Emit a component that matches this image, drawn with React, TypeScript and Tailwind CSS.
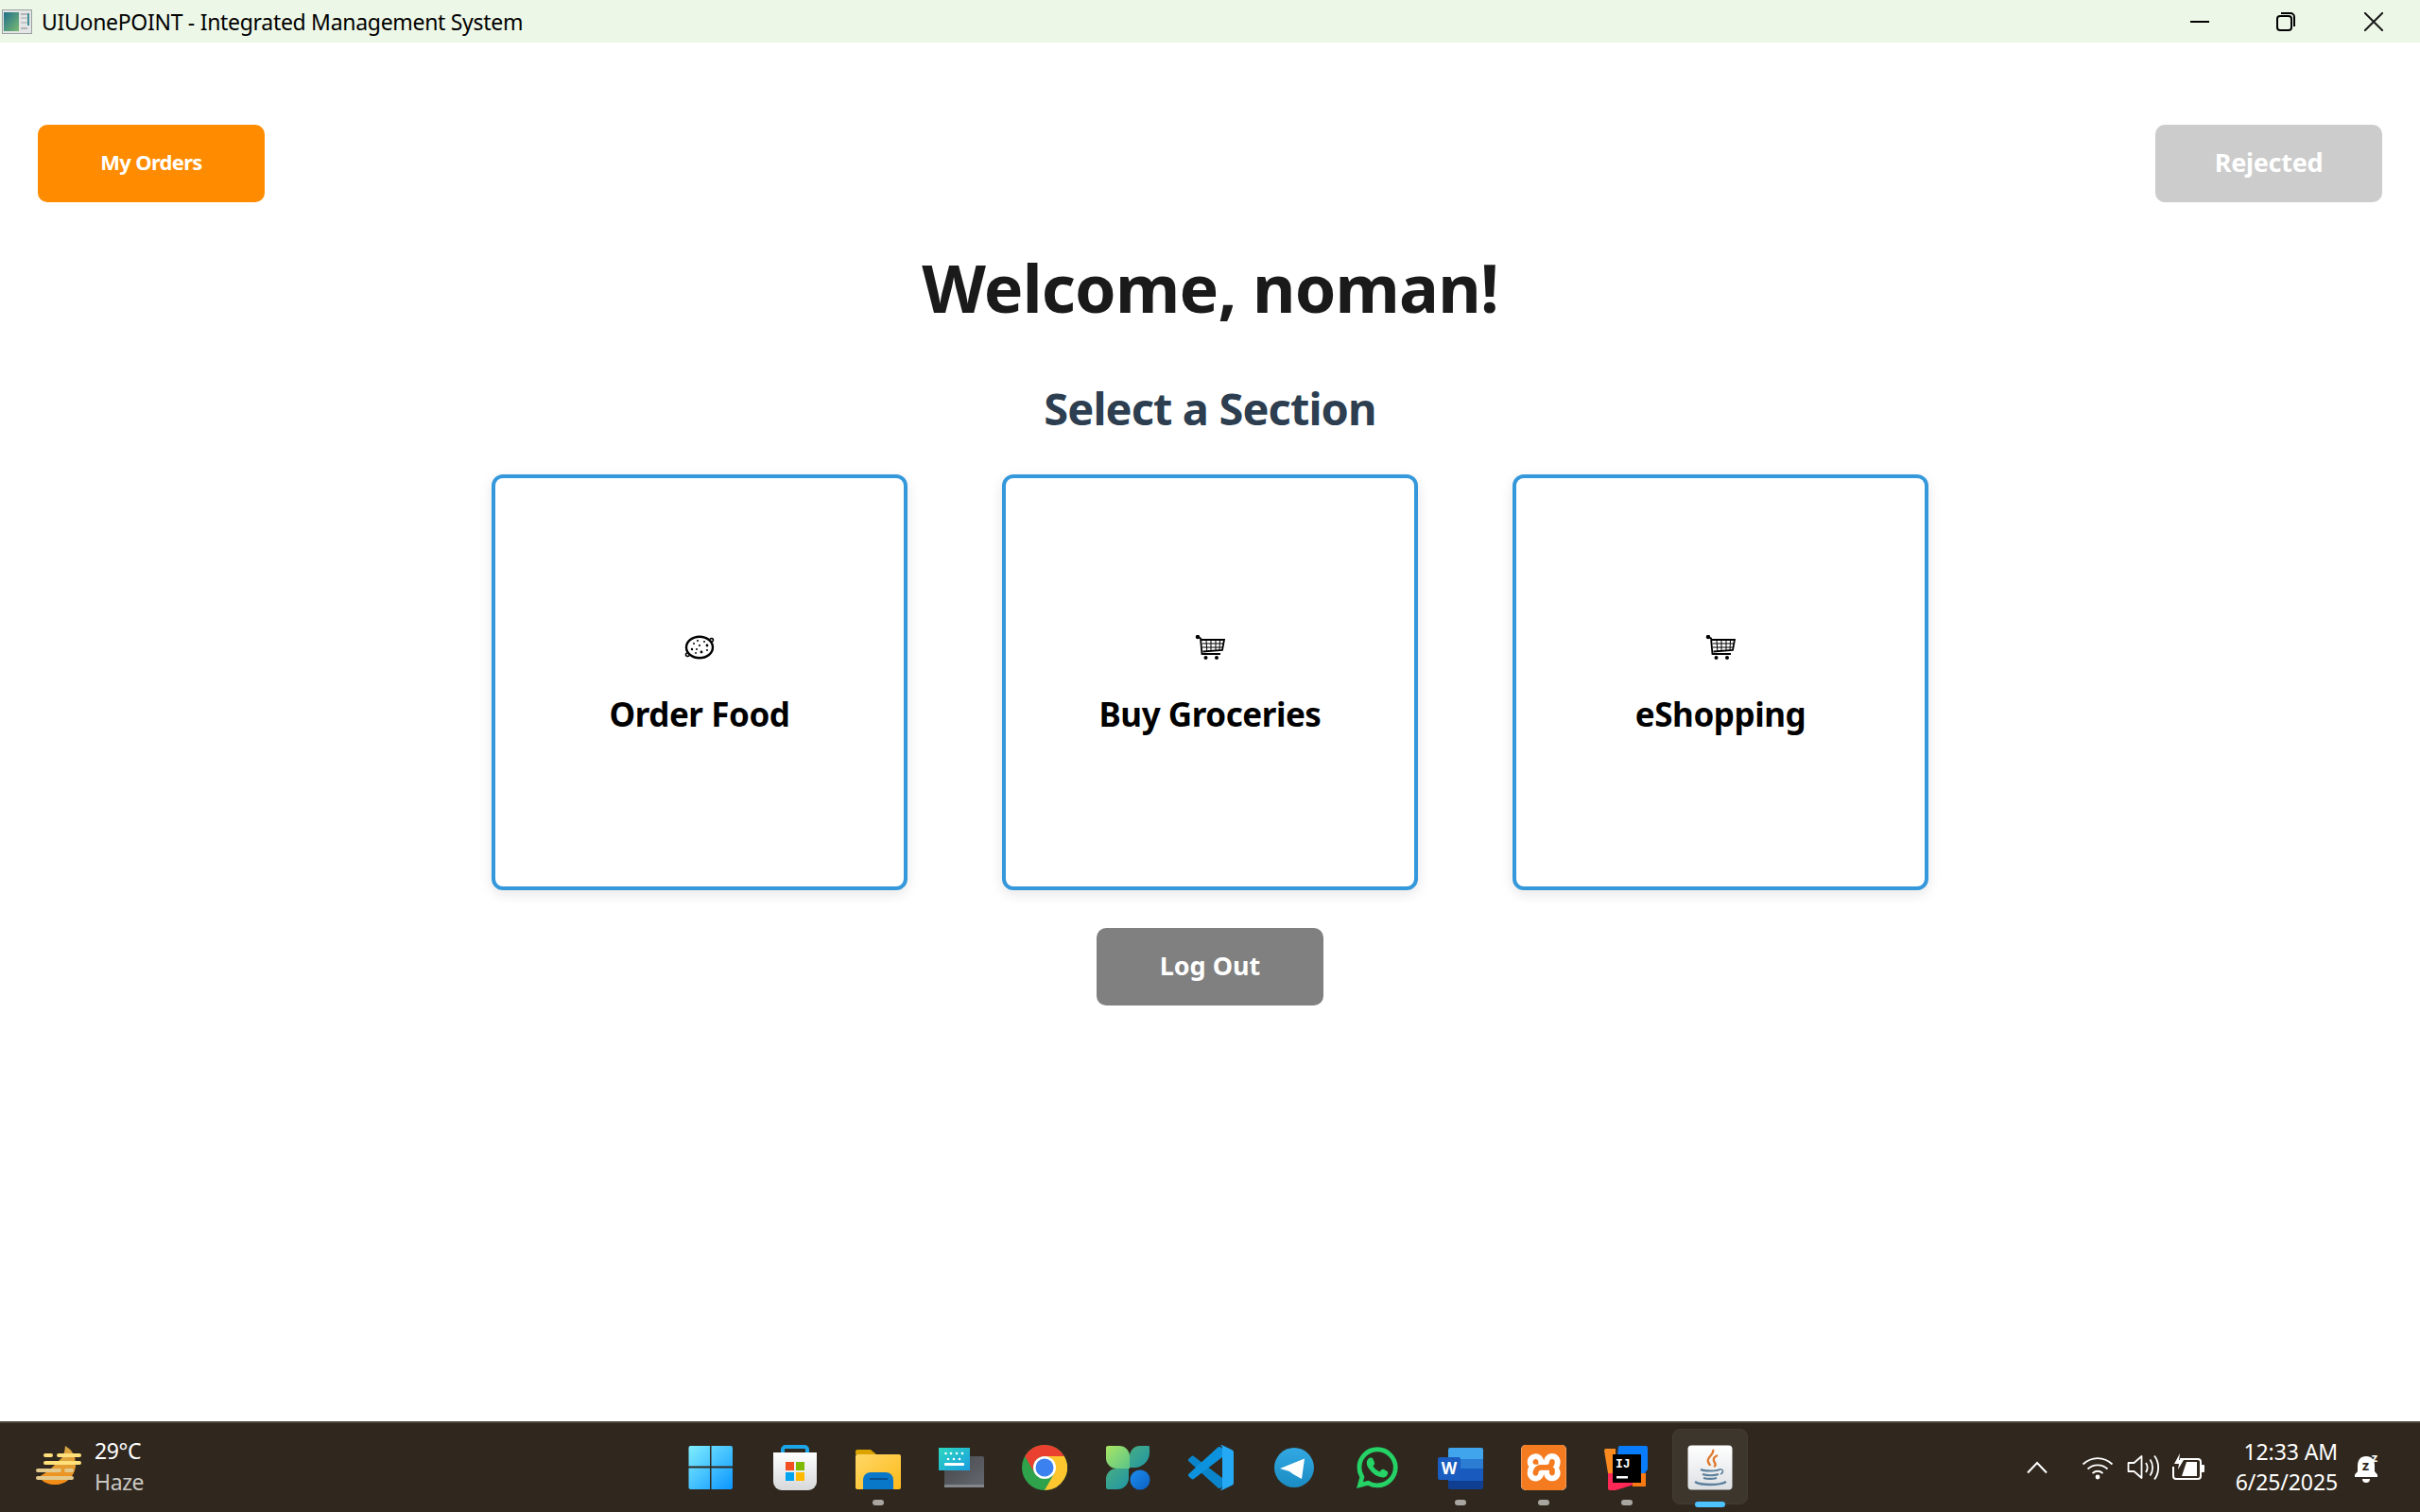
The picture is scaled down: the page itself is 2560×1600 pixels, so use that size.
import { FaWhatsapp } from 'react-icons/fa';
import { SiXampp } from 'react-icons/si';

const AppIcon = () => (
  <svg width="32" height="26" viewBox="0 0 32 26">
    <rect x="0.5" y="0.5" width="31" height="25" fill="#e4e6e6" stroke="#9aa0a3" />
    <defs>
      <linearGradient id="titleIcon" x1="0" y1="0" x2="1" y2="1">
        <stop offset="0" stopColor="#1f6f8b" />
        <stop offset="1" stopColor="#7dbb72" />
      </linearGradient>
    </defs>
    <rect x="2" y="3" width="16" height="20" fill="url(#titleIcon)" />
    <rect x="20" y="4" width="9" height="2" fill="#b3b6b8" />
    <rect x="20" y="8" width="7" height="2" fill="#c4c6c8" />
    <rect x="20" y="13" width="7" height="2" fill="#c4c6c8" />
    <rect x="20" y="19" width="7" height="2" fill="#b3b6b8" />
    <rect x="27" y="4" width="2" height="13" fill="#3f8f97" />
  </svg>
);

const FoodIcon = () => (
  <svg width="32" height="26" viewBox="0 0 32 26" fill="none">
    <path d="M27 4.5c1-1.6 3.5-1 3.5.7 0 1-.7 1.6-1.6 1.8M5 21.5c-1 1.6-3.6 1-3.6-.7 0-1 .8-1.7 1.7-1.8" stroke="#000" strokeWidth="1.6" />
    <ellipse cx="16" cy="13" rx="14" ry="11.3" fill="#fff" stroke="#000" strokeWidth="2.4" />
    <g fill="#000">
      <circle cx="8" cy="15" r="1.2" />
      <circle cx="10" cy="9" r="1" />
      <circle cx="14" cy="6" r="1" />
      <circle cx="16" cy="11" r="1.1" />
      <circle cx="21" cy="7" r="1" />
      <circle cx="24" cy="11" r="1.4" />
      <circle cx="13" cy="15" r="1" />
      <circle cx="18" cy="18" r="1.4" />
      <circle cx="24" cy="16" r="1" />
      <circle cx="12" cy="19" r="0.9" />
    </g>
  </svg>
);

const CartIcon = () => (
  <svg width="32" height="26" viewBox="0 0 32 26" fill="none" stroke="#000">
    <path d="M1 1.5 6 3.5 7.5 20H27" strokeWidth="1.8" />
    <circle cx="3" cy="2" r="2.2" fill="#000" stroke="none" />
    <path d="M7 5H31L29 16 8.5 17.5" strokeWidth="1.8" />
    <path d="M12 5.5 12.8 17M17 5.5V17M22 5.5V16.5M26.5 5.5 26 16M7.5 9H30.3M8 13H29.6" strokeWidth="1" />
    <circle cx="11.5" cy="24" r="2" fill="#000" stroke="none" />
    <circle cx="23" cy="24" r="2" fill="#000" stroke="none" />
  </svg>
);

const WindowsIcon = () => (
  <svg width="48" height="48" viewBox="0 0 48 48" className="overflow-visible">
    <defs>
      <linearGradient id="win" x1="0" y1="0" x2="1" y2="1">
        <stop offset="0" stopColor="#80eeff" />
        <stop offset="1" stopColor="#0b96ff" />
      </linearGradient>
    </defs>
    <path d="M3 2h20.5v21.5H1V4a2 2 0 0 1 2-2ZM25 2h20.5a2 2 0 0 1 2 2v19.5H25V2ZM1 25.500h22.500V48H3a2 2 0 0 1-2-2V25.500ZM25 25.500h22.500V46a2 2 0 0 1-2 2H25V25.500Z" fill="url(#win)" transform="translate(-1.500 -1)" />
  </svg>
);

const StoreIcon = () => (
  <svg width="48" height="48" viewBox="0 0 48 48">
    <defs>
      <linearGradient id="bag" x1="0" y1="0" x2="0" y2="1">
        <stop offset="0" stopColor="#ffffff" />
        <stop offset="1" stopColor="#d6d8da" />
      </linearGradient>
    </defs>
    <path d="M11 10V5a3 3 0 0 1 3-3h20a3 3 0 0 1 3 3v5" fill="none" stroke="#1ba6ea" strokeWidth="4" strokeLinecap="round" />
    <path d="M1 8h46v31a9 9 0 0 1-9 9H10a9 9 0 0 1-9-9V8Z" fill="url(#bag)" />
    <rect x="14" y="18" width="9" height="9" fill="#f25022" />
    <rect x="25" y="18" width="9" height="9" fill="#7fba00" />
    <rect x="14" y="29" width="9" height="9" fill="#00a4ef" />
    <rect x="25" y="29" width="9" height="9" fill="#ffb900" />
  </svg>
);

const FolderIcon = () => (
  <svg width="48" height="48" viewBox="0 0 48 48">
    <defs>
      <linearGradient id="folder" x1="0" y1="0" x2="1" y2="1">
        <stop offset="0" stopColor="#ffd767" />
        <stop offset="1" stopColor="#fdbb1a" />
      </linearGradient>
    </defs>
    <path d="M0 7a2 2 0 0 1 2-2h14l6 5h-22Z" fill="#dba300" />
    <path d="M2 10h44a2 2 0 0 1 2 2v33a2 2 0 0 1-2 2H2a2 2 0 0 1-2-2V12a2 2 0 0 1 2-2Z" fill="url(#folder)" />
    <path d="M8 47V37a8 8 0 0 1 8-8h16a8 8 0 0 1 8 8v10Z" fill="#0a78c8" />
    <rect x="15" y="35" width="19" height="2" fill="#06508f" />
  </svg>
);

const KeyboardIcon = () => (
  <svg width="48" height="48" viewBox="0 0 48 48">
    <defs>
      <linearGradient id="kbdBack" x1="0" y1="0" x2="1" y2="1">
        <stop offset="0" stopColor="#43464a" />
        <stop offset="1" stopColor="#666a70" />
      </linearGradient>
      <linearGradient id="kbdTop" x1="0" y1="0" x2="1" y2="1">
        <stop offset="0" stopColor="#2cd8c0" />
        <stop offset="1" stopColor="#1a9ce0" />
      </linearGradient>
    </defs>
    <rect x="6" y="12" width="42" height="33" rx="2" fill="url(#kbdBack)" />
    <rect x="6" y="42" width="42" height="3" fill="#82878c" />
    <rect x="0" y="3" width="33" height="24" fill="url(#kbdTop)" />
    <g fill="#fff">
      <circle cx="7.500" cy="9" r="1.300" />
      <circle cx="13" cy="9" r="1.300" />
      <circle cx="19" cy="9" r="1.300" />
      <circle cx="25" cy="9" r="1.300" />
      <circle cx="10" cy="15" r="1.300" />
      <circle cx="16" cy="15" r="1.300" />
      <circle cx="22" cy="15" r="1.300" />
      <rect x="6" y="19" width="21" height="3" rx="1" />
    </g>
  </svg>
);

const ChromeIcon = () => (
  <svg width="48" height="48" viewBox="0 0 48 48">
    <circle cx="24" cy="24" r="24" fill="#2fa24c" />
    <path d="M44.800 12A24 24 0 0 1 24 48L34.400 30 24 12Z" fill="#fdc62f" />
    <path d="M3.200 12A24 24 0 0 1 44.800 12H24A12 12 0 0 0 13.600 30Z" fill="#e9402f" />
    <circle cx="24" cy="24" r="12" fill="#fff" />
    <circle cx="24" cy="24" r="9.500" fill="#3b82f0" />
  </svg>
);

const PetalIcon = () => (
  <svg width="48" height="48" viewBox="0 0 48 48">
    <defs>
      <linearGradient id="petalA" x1="0" y1="0" x2="1" y2="1">
        <stop offset="0" stopColor="#a8e664" />
        <stop offset="1" stopColor="#5cc488" />
      </linearGradient>
      <linearGradient id="petalB" x1="0" y1="0" x2="1" y2="1">
        <stop offset="0" stopColor="#48ad84" />
        <stop offset="1" stopColor="#1f96a4" />
      </linearGradient>
      <linearGradient id="petalC" x1="0" y1="0" x2="1" y2="1">
        <stop offset="0" stopColor="#1c8fee" />
        <stop offset="1" stopColor="#0c5fc4" />
      </linearGradient>
    </defs>
    <path d="M1 3a2 2 0 0 1 2-2h12a11 11 0 0 1 11 11v13H12A11 11 0 0 1 1 14Z" fill="url(#petalA)" />
    <path d="M26 12A11 11 0 0 1 37 1h9a1 1 0 0 1 1 1v6a16 16 0 0 1-16 16h-5Z" fill="url(#petalB)" />
    <path d="M12 25h13v10a12 12 0 0 1-12 12H3a2 2 0 0 1-2-2v-9a11 11 0 0 1 11-11Z" fill="url(#petalB)" />
    <circle cx="37" cy="37" r="10.500" fill="url(#petalC)" />
  </svg>
);

const VsCodeIcon = () => (
  <svg width="48" height="48" viewBox="0 0 100 100">
    <path d="M1.400 36.500a4.200 4.200 0 0 1 0-6.200l5.500-5a4.200 4.200 0 0 1 5.300-.2L75 72.700V90a6 6 0 0 1-9.600 4.800Z" fill="#0a85cc" />
    <path d="M1.400 63.500a4.200 4.200 0 0 0 0 6.200l5.500 5a4.200 4.200 0 0 0 5.300.2L75 27.300V10a6 6 0 0 0-9.600-4.800Z" fill="#0d93de" />
    <path d="M71 99.300a6.200 6.200 0 0 0 5-.2l20.500-9.900a6.200 6.200 0 0 0 3.500-5.600V16.400a6.200 6.200 0 0 0-3.500-5.600L76 .9a6.200 6.200 0 0 0-5-.2 6 6 0 0 1 4 5.300V94a6 6 0 0 1-4 5.300Z" fill="#26a9f5" />
  </svg>
);

const TelegramIcon = () => (
  <svg width="48" height="48" viewBox="0 0 48 48">
    <defs>
      <linearGradient id="tg" x1="0" y1="0" x2="0" y2="1">
        <stop offset="0" stopColor="#32a8e2" />
        <stop offset="1" stopColor="#1b8cc4" />
      </linearGradient>
    </defs>
    <circle cx="24" cy="24" r="21" fill="url(#tg)" />
    <path d="M9 25 35 14.500 32 36 23 31 19 28Z" fill="#fff" />
  </svg>
);

const WordIcon = () => (
  <svg width="48" height="48" viewBox="0 0 48 48">
    <path d="M13 3h33a2 2 0 0 1 2 2v10H11V5a2 2 0 0 1 2-2Z" fill="#41a5ee" />
    <rect x="11" y="15" width="37" height="15" fill="#2b7cd3" />
    <rect x="11" y="25" width="37" height="13" fill="#185abd" />
    <path d="M11 38h37v7a2 2 0 0 1-2 2H13a2 2 0 0 1-2-2Z" fill="#103f91" />
    <rect x="0" y="13" width="24" height="24" rx="2" fill="#1a5cc0" />
    <text x="12" y="31" textAnchor="middle" fontFamily="'Noto Sans', sans-serif" fontWeight="700" fontSize="17" fill="#fff">W</text>
  </svg>
);

const XamppIcon = () => (
  <div className="flex h-[48px] w-[48px] items-center justify-center overflow-hidden rounded-[5px] bg-white">
    <SiXampp size={52} color="#f47b20" />
  </div>
);

const IdeaIcon = () => (
  <svg width="48" height="48" viewBox="0 0 48 48">
    <path d="M0 6a2 2 0 0 1 2-2h10v26H4Z" fill="#fb8a20" />
    <path d="M15 2a2 2 0 0 1 2-1h27a2 2 0 0 1 2 2v22a2 2 0 0 1-1 2l-4 6H12Z" fill="#087cfa" />
    <path d="M4 30h28v9h9L12 48H6a2 2 0 0 1-2-2Z" fill="#fe2857" />
    <rect x="30" y="30" width="14" height="14" fill="#f97a12" />
    <rect x="9" y="10" width="30" height="30" fill="#000" />
    <text x="12" y="24" fontFamily="'Liberation Mono', monospace" fontWeight="700" fontSize="13" fill="#fff">IJ</text>
    <rect x="13" y="33" width="12" height="2.500" fill="#fff" />
  </svg>
);

const JavaIcon = () => (
  <svg width="48" height="48" viewBox="0 0 48 48">
    <defs>
      <linearGradient id="javaBg" x1="0" y1="0" x2="0" y2="1">
        <stop offset="0" stopColor="#ffffff" />
        <stop offset="1" stopColor="#dde0e3" />
      </linearGradient>
    </defs>
    <rect x="0.500" y="0.500" width="47" height="47" rx="4" fill="url(#javaBg)" />
    <path d="M27 5c2 5-7 8-5 13 .6 1.800 2 3 2 4M32 11c-5 2-5 5-3 8 1 1.600 1 3-1 4" fill="none" stroke="#e07a2e" strokeWidth="2.400" />
    <path d="M14 26c4 2 17 2 20 0M16 31c4 1.600 13 1.600 17 0M17 35c4 1 10 1 14 0" fill="none" stroke="#5b7f9c" strokeWidth="2" />
    <path d="M8 39c6 4 26 4 33 0" fill="none" stroke="#5b7f9c" strokeWidth="2.400" />
    <path d="M34 26c4-1 5 3 1 5" fill="none" stroke="#5b7f9c" strokeWidth="1.500" />
  </svg>
);

const WeatherIcon = () => (
  <svg width="48" height="46" viewBox="0 0 48 46">
    <defs>
      <linearGradient id="sun" x1="0" y1="0" x2="0" y2="1">
        <stop offset="0" stopColor="#d9a845" />
        <stop offset="1" stopColor="#f58a12" />
      </linearGradient>
    </defs>
    <path d="M31 0A22 22 0 0 1 42 19 22 22 0 0 1 3 33C12 34 29 24 31 0Z" fill="url(#sun)" />
    <path d="M3 33A22 22 0 0 0 42 19L30 10 14 26Z" fill="url(#sun)" />
    <g fill="#ffe07a">
      <rect x="8" y="8" width="10" height="4" rx="2" />
      <rect x="22" y="8" width="26" height="4" rx="2" />
      <rect x="8" y="16" width="40" height="4" rx="2" />
    </g>
    <g fill="#e3c98c">
      <rect x="0" y="24" width="27" height="4" rx="2" />
      <rect x="30" y="24" width="10" height="4" rx="2" />
      <rect x="0" y="32" width="40" height="4" rx="2" />
    </g>
  </svg>
);

const TrayIcons = () => (
  <div className="flex items-center">
    <svg width="22" height="14" viewBox="0 0 22 14" fill="none" stroke="#fff" strokeWidth="2" className="ml-[291px] mr-[36px]">
      <path d="M1 12.500 11 2 21 12.500" />
    </svg>
    <svg width="34" height="26" viewBox="0 0 34 26" fill="none" stroke="#fff" strokeWidth="1.800" className="mr-[14px]">
      <path d="M1.500 9.500c9-8.500 22-8.500 31 0M6.500 14.500c6-5.500 15-5.500 21 0M11.500 19c3.500-2.800 7.500-2.800 11 0" />
      <circle cx="17" cy="23" r="2.400" fill="#fff" stroke="none" />
    </svg>
    <svg width="34" height="30" viewBox="0 0 34 30" fill="none" stroke="#fff" strokeWidth="1.800" className="mr-[14px]">
      <path d="M1.500 10v9h6l8 7V3l-8 7Z" strokeLinejoin="round" />
      <path d="M20 10c2 3 2 7 0 10M24.500 6.500c3.500 5 3.500 12 0 17M29 2.500c5.500 7 5.500 18 0 25" />
    </svg>
    <svg width="34" height="30" viewBox="0 0 34 30" fill="none">
      <path d="M8 6H27a3 3 0 0 1 3 3v15a3 3 0 0 1-3 3H4a3 3 0 0 1-3-3V14" stroke="#fff" strokeWidth="2" />
      <rect x="30" y="12" width="4" height="8" rx="1" fill="#fff" />
      <path d="M10 24l5-15h11v15Z" fill="#fff" />
      <path d="M8 0 2 11h5l-1 6 6-10H7Z" fill="#fff" />
    </svg>
  </div>
);

const BellIcon = () => (
  <svg width="28" height="32" viewBox="0 0 28 32" className="overflow-visible">
    <path d="M12 4c-6 0-9 4-9 10v6l-3 3.500V26h24v-2.500L21 20v-6c0-6-3-10-9-10Z" fill="#fff" />
    <path d="M8 28h8a4 4 0 0 1-8 0Z" fill="#fff" />
    <text x="11.500" y="19" textAnchor="middle" fontFamily="'Noto Sans', sans-serif" fontWeight="700" fontSize="15" fill="#30281e">z</text>
    <text x="21" y="10" textAnchor="middle" fontFamily="'Noto Sans', sans-serif" fontWeight="700" fontSize="13" fill="#fff">z</text>
  </svg>
);

const taskbarApps = [
  { name: 'start', icon: <WindowsIcon /> },
  { name: 'store', icon: <StoreIcon /> },
  { name: 'explorer', icon: <FolderIcon />, open: true },
  { name: 'keyboard', icon: <KeyboardIcon /> },
  { name: 'chrome', icon: <ChromeIcon /> },
  { name: 'petal', icon: <PetalIcon /> },
  { name: 'vscode', icon: <VsCodeIcon /> },
  { name: 'telegram', icon: <TelegramIcon /> },
  { name: 'whatsapp', icon: <FaWhatsapp size={48} color="#25d366" stroke="#25d366" strokeWidth={14} /> },
  { name: 'word', icon: <WordIcon />, open: true },
  { name: 'xampp', icon: <XamppIcon />, open: true },
  { name: 'idea', icon: <IdeaIcon />, open: true },
  { name: 'java', icon: <JavaIcon />, active: true },
];

const sections = [
  { label: 'Order Food', icon: <FoodIcon /> },
  { label: 'Buy Groceries', icon: <CartIcon /> },
  { label: 'eShopping', icon: <CartIcon /> },
];

export default function App() {
  return (
    <div className="flex h-screen w-full flex-col overflow-hidden bg-white font-['Noto_Sans',sans-serif]">
      {/* Title bar */}
      <div className="flex h-[45px] shrink-0 items-center justify-between bg-[#ecf7e7]">
        <div className="flex items-center">
          <div className="ml-[2px] mr-[10px] flex">
            <AppIcon />
          </div>
          <span className="pt-[1px] text-[23px] tracking-[-0.3px] text-black">UIUonePOINT - Integrated Management System</span>
        </div>
        <div className="flex items-center">
          <div className="mr-[71px] h-[2px] w-[20px] bg-black" />
          <svg width="20" height="20" viewBox="0 0 20 20" fill="none" stroke="#000" strokeWidth="2" className="mr-[73px]">
            <rect x="1" y="4" width="15" height="15" rx="3" />
            <path d="M5 1h10a4 4 0 0 1 4 4v10" />
          </svg>
          <svg width="20" height="20" viewBox="0 0 20 20" fill="none" stroke="#1a1a1a" strokeWidth="2" className="mr-[39px]">
            <path d="M0 0 20 20M20 0 0 20" />
          </svg>
        </div>
      </div>

      {/* Main content */}
      <div className="flex flex-1 flex-col items-center px-[40px] pt-[87px]">
        <div className="flex w-full items-center justify-between">
          <button className="h-[82px] w-[240px] rounded-[10px] bg-[#ff8c00] pb-[3px] text-[22px] font-bold tracking-[-0.7px] text-white">My Orders</button>
          <button className="h-[82px] w-[240px] rounded-[10px] bg-[#cccccc] pb-[2px] text-[27px] font-bold tracking-[-0.3px] text-white">Rejected</button>
        </div>
        <h1 className="mt-[42px] text-[70px] font-bold leading-[96px] tracking-[-0.8px] text-[#1a1a1a]">Welcome, noman!</h1>
        <h2 className="mt-[48px] text-[47px] font-bold leading-[64px] tracking-[-0.9px] text-[#2c3e50]">Select a Section</h2>
        <div className="mt-[38px] flex gap-[100px]">
          {sections.map((section) => (
            <div
              key={section.label}
              className="flex h-[440px] w-[440px] flex-col items-center justify-center rounded-[12px] border-[4px] border-[#3498db] bg-white pt-[8px] shadow-[0_4px_14px_rgba(0,0,0,0.1)]"
            >
              {section.icon}
              <span className="mt-[34px] text-[35px] font-bold leading-[48px] tracking-[-0.45px] text-black">{section.label}</span>
            </div>
          ))}
        </div>
        <button className="mt-[40px] h-[82px] w-[240px] rounded-[10px] bg-[#808080] pb-[2px] text-[27px] font-bold tracking-[0px] text-white">Log Out</button>
      </div>

      {/* Taskbar */}
      <div className="grid h-[96px] shrink-0 grid-cols-[709px_1144px_1fr] border-t-[2px] border-[#4a443b] bg-[#30281e]">
        <div className="flex items-center pl-[38px]">
          <WeatherIcon />
          <div className="ml-[14px] flex flex-col pb-[2px]">
            <span className="text-[23px] leading-[33px] tracking-[-0.4px] text-white">29°C</span>
            <span className="text-[23px] leading-[33px] tracking-[-0.4px] text-[#c9c7c3]">Haze</span>
          </div>
        </div>
        <div className="flex items-center">
          {taskbarApps.map((app) => (
            <div key={app.name} className="relative flex h-full w-[88px] items-center justify-center">
              {app.active && <div className="absolute left-[4px] top-[6px] h-[80px] w-[80px] rounded-[8px] border border-[#423c33] bg-[#3d362c]" />}
              <div className="relative flex">{app.icon}</div>
              {app.open && <div className="absolute bottom-[7px] left-[38px] h-[6px] w-[12px] rounded-full bg-[#a9a6a1]" />}
              {app.active && <div className="absolute bottom-[5px] left-[28px] h-[6px] w-[32px] rounded-full bg-[#4cc2ff]" />}
            </div>
          ))}
        </div>
        <div className="flex items-center justify-between pr-[41px]">
          <TrayIcons />
          <div className="flex items-center">
            <div className="mr-[18px] flex flex-col items-end pb-[2px] text-[23px] leading-[32px] tracking-[-0.1px] text-white">
              <span>12:33 AM</span>
              <span>6/25/2025</span>
            </div>
            <BellIcon />
          </div>
        </div>
      </div>
    </div>
  );
}
